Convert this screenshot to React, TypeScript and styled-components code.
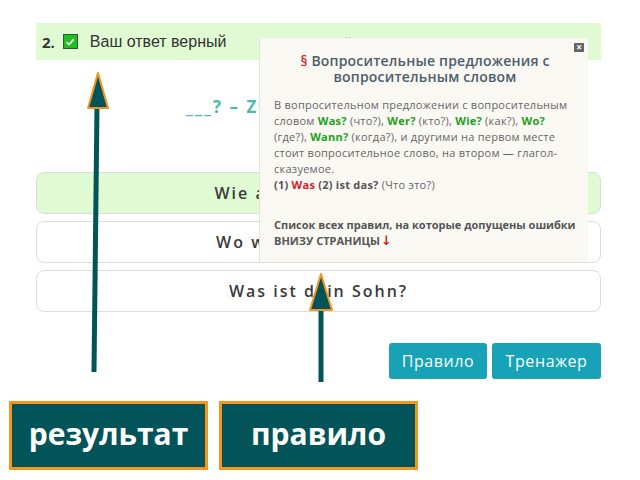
import React from 'react'
import styled, { createGlobalStyle } from 'styled-components'

const GlobalStyle = createGlobalStyle`
  html, body {
    margin: 0;
    padding: 0;
    background: #ffffff;
  }
  body {
    font-family: 'Open Sans', 'Liberation Sans', sans-serif;
  }
`

const options = [
  { text: 'Wie alt ist dein Sohn?', correct: true },
  { text: 'Wo wohnt dein Sohn?', correct: false },
  { text: 'Was ist dein Sohn?', correct: false }
]

export default function App() {
  return (
    <Page>
      <GlobalStyle />
      <Card>
        <ResultBar>
          <Number>2.</Number>
          <CheckBox>
            <svg width="10" height="10" viewBox="0 0 10 10">
              <path d="M1.5 5.2 L4 7.6 L8.6 2.4" fill="none" stroke="#fff" strokeWidth="1.6" />
            </svg>
          </CheckBox>
          <ResultText>Ваш ответ верный</ResultText>
          <CommentText>Комментарий</CommentText>
        </ResultBar>
        <Question>___? – Zwölf Jahre.</Question>
        <OptionList>
          {options.map((o) => (
            <Option key={o.text} correct={o.correct}>
              {o.text}
            </Option>
          ))}
        </OptionList>
        <ButtonRow>
          <InfoButton wide={98}>Правило</InfoButton>
          <InfoButton wide={109}>Тренажер</InfoButton>
        </ButtonRow>
      </Card>
      <LabelRow>
        <Label>результат</Label>
        <Label>правило</Label>
      </LabelRow>

      <RulePopup>
        <CloseButton>×</CloseButton>
        <RuleTitle>
          <Para>§</Para> Вопросительные предложения с вопросительным словом
        </RuleTitle>
        <RuleBody>
          В вопросительном предложении с вопросительным словом <Word>Was?</Word> (что?),{' '}
          <Word>Wer?</Word> (кто?), <Word>Wie?</Word> (как?), <Word>Wo?</Word> (где?),{' '}
          <Word>Wann?</Word> (когда?), и другими на первом месте стоит вопросительное слово, на
          втором — глагол-сказуемое.
          <br />
          <Strong>
            (1) <Red>Was</Red> (2) ist das?
          </Strong>{' '}
          (Что это?)
        </RuleBody>
        <RuleFooter>
          <FooterLine>Список всех правил, на которые допущены ошибки</FooterLine>
          <FooterLine>
            ВНИЗУ СТРАНИЦЫ<DownArrow>↓</DownArrow>
          </FooterLine>
        </RuleFooter>
      </RulePopup>

      <Arrows width="640" height="480" viewBox="0 0 640 480">
        <line x1="94" y1="372" x2="97" y2="106" stroke="#035458" strokeWidth="5" />
        <polygon points="98,73 88,108 108,108" fill="#035458" stroke="#f7941d" strokeWidth="2" strokeLinejoin="round" />
        <line x1="321" y1="382" x2="321" y2="308" stroke="#035458" strokeWidth="5" />
        <polygon points="321,274 310,310 332,310" fill="#035458" stroke="#f7941d" strokeWidth="2" strokeLinejoin="round" />
      </Arrows>
    </Page>
  )
}

const Page = styled.div`
  position: relative;
  width: 640px;
  height: 480px;
  overflow: hidden;
  display: flex;
  flex-direction: column;
`

const Card = styled.div`
  padding: 23px 39px 0 36px;
  display: flex;
  flex-direction: column;
`

const ResultBar = styled.div`
  height: 37px;
  background: #e0fbd3;
  display: flex;
  align-items: center;
  padding-left: 6px;
  overflow: hidden;
`

const Number = styled.span`
  font-family: 'Open Sans', sans-serif;
  font-weight: 700;
  font-size: 15px;
  color: #333;
  margin-right: 8px;
`

const CheckBox = styled.span`
  width: 13px;
  height: 13px;
  background: #1fbf1f;
  border: 1px solid #2b5a2b;
  display: inline-flex;
  align-items: center;
  justify-content: center;
  margin-right: 12px;
`

const ResultText = styled.span`
  font-family: 'Liberation Sans', Arial, sans-serif;
  font-size: 16px;
  color: #333;
`

const CommentText = styled.span`
  font-family: 'Open Sans', sans-serif;
  font-size: 13px;
  color: #555;
  margin-left: 38px;
`

const Question = styled.div`
  margin-top: 35px;
  padding-left: 150px;
  font-family: 'Open Sans', sans-serif;
  font-weight: 700;
  font-size: 17px;
  color: #4cb8b0;
  letter-spacing: 2px;
  height: 22px;
  white-space: nowrap;
`

const OptionList = styled.div`
  margin-top: 55px;
  display: flex;
  flex-direction: column;
  gap: 7px;
`

const Option = styled.div<{ correct?: boolean }>`
  height: 40px;
  border: 1px solid #dcdcdc;
  border-radius: 8px;
  background: ${(p) => (p.correct ? '#e0fbd3' : '#ffffff')};
  display: flex;
  align-items: center;
  justify-content: center;
  font-family: 'Open Sans', sans-serif;
  font-weight: 600;
  font-size: 16px;
  letter-spacing: 2px;
  color: #3a3a3a;
`

const ButtonRow = styled.div`
  margin-top: 31px;
  display: flex;
  justify-content: flex-end;
  gap: 5px;
`

const InfoButton = styled.button<{ wide: number }>`
  width: ${(p) => p.wide}px;
  height: 36px;
  padding: 0;
  border: none;
  border-radius: 3px;
  background: #17a2b8;
  color: #ffffff;
  font-family: 'Open Sans', sans-serif;
  font-size: 16px;
  font-weight: 500;
  letter-spacing: 0.6px;
`

const LabelRow = styled.div`
  margin-top: 22px;
  padding-left: 9px;
  display: flex;
  gap: 11px;
`

const Label = styled.div`
  width: 199px;
  height: 69px;
  box-sizing: border-box;
  border: 3px solid #f7941d;
  background: #035458;
  color: #ffffff;
  font-family: 'Open Sans', sans-serif;
  font-weight: 700;
  font-size: 30px;
  display: flex;
  align-items: center;
  justify-content: center;
  padding-bottom: 4px;
`

const RulePopup = styled.div`
  position: absolute;
  left: 259px;
  top: 38px;
  width: 329px;
  height: 224px;
  box-sizing: border-box;
  background: #faf8f3;
  border-left: 1px solid #e3e3dc;
  padding: 15px 12px 0 14px;
  font-family: 'Open Sans', sans-serif;
`

const CloseButton = styled.span`
  position: absolute;
  right: 4px;
  top: 5px;
  width: 10px;
  height: 9px;
  background: #666;
  color: #fff;
  font-size: 10px;
  line-height: 9px;
  text-align: center;
  font-weight: 700;
`

const RuleTitle = styled.div`
  text-align: center;
  font-size: 14px;
  font-weight: 600;
  line-height: 16px;
  letter-spacing: 0.2px;
  color: #4e5d6c;
  padding: 0 20px;
`

const Para = styled.span`
  color: #d0202e;
`

const RuleBody = styled.div`
  margin-top: 12px;
  font-size: 11px;
  line-height: 16px;
  letter-spacing: 0.25px;
  color: #666;
`

const Word = styled.b`
  color: #23a023;
`

const Strong = styled.b`
  color: #555;
`

const Red = styled.span`
  color: #d0202e;
  font-weight: 700;
`

const DownArrow = styled.span`
  color: #d0202e;
  font-family: 'DejaVu Sans', sans-serif;
  font-weight: 700;
  font-size: 13px;
  margin-left: 1px;
`

const RuleFooter = styled.div`
  margin-top: 24px;
  font-size: 11px;
  line-height: 16px;
  font-weight: 700;
  color: #555;
`

const FooterLine = styled.div`
  white-space: nowrap;
`

const Arrows = styled.svg`
  position: absolute;
  left: 0;
  top: 0;
  pointer-events: none;
`
